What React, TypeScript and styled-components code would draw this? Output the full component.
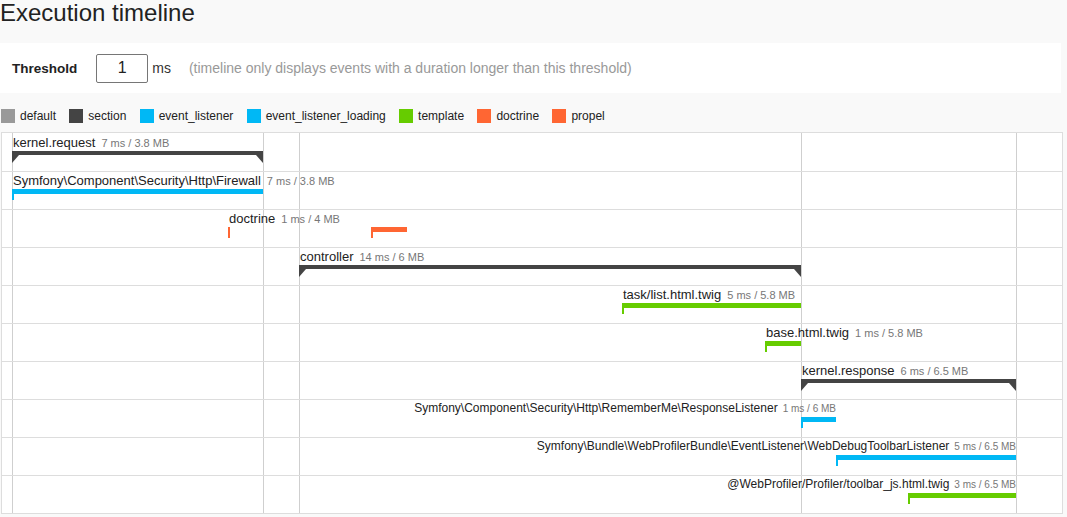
import React from 'react';
import styled, { createGlobalStyle, css } from 'styled-components';

type Kind = 'default' | 'section' | 'event_listener' | 'event_listener_loading' | 'template' | 'doctrine' | 'propel';

interface TimelineEvent {
  label: string;
  duration: string;
  kind: Kind;
  periods: [number, number][];
  alignEnd?: boolean;
}

const COLORS: Record<Kind, string> = {
  default: '#999999',
  section: '#444444',
  event_listener: '#00b8f5',
  event_listener_loading: '#00b8f5',
  template: '#66cc00',
  doctrine: '#ff6633',
  propel: '#ff6633',
};

const LEGEND: Kind[] = ['default', 'section', 'event_listener', 'event_listener_loading', 'template', 'doctrine', 'propel'];

// page x of the timeline's inner left edge, and its inner width
const ORIGIN = 2;
const INNER_WIDTH = 1060;

const GRID_LINES = [12, 263, 299, 801, 1016];

const EVENTS: TimelineEvent[] = [
  { label: 'kernel.request', duration: '7 ms / 3.8 MB', kind: 'section', periods: [[12, 263]] },
  { label: 'Symfony\\Component\\Security\\Http\\Firewall', duration: '7 ms / 3.8 MB', kind: 'event_listener', periods: [[12, 263]] },
  { label: 'doctrine', duration: '1 ms / 4 MB', kind: 'doctrine', periods: [[228, 229], [371, 407]] },
  { label: 'controller', duration: '14 ms / 6 MB', kind: 'section', periods: [[299, 801]] },
  { label: 'task/list.html.twig', duration: '5 ms / 5.8 MB', kind: 'template', periods: [[622, 801]] },
  { label: 'base.html.twig', duration: '1 ms / 5.8 MB', kind: 'template', periods: [[765, 801]] },
  { label: 'kernel.response', duration: '6 ms / 6.5 MB', kind: 'section', periods: [[801, 1016]] },
  {
    label: 'Symfony\\Component\\Security\\Http\\RememberMe\\ResponseListener',
    duration: '1 ms / 6 MB',
    kind: 'event_listener',
    periods: [[801, 836]],
    alignEnd: true,
  },
  {
    label: 'Symfony\\Bundle\\WebProfilerBundle\\EventListener\\WebDebugToolbarListener',
    duration: '5 ms / 6.5 MB',
    kind: 'event_listener',
    periods: [[836, 1016]],
    alignEnd: true,
  },
  {
    label: '@WebProfiler/Profiler/toolbar_js.html.twig',
    duration: '3 ms / 6.5 MB',
    kind: 'template',
    periods: [[908, 1016]],
    alignEnd: true,
  },
];

const GlobalStyle = createGlobalStyle`
  body {
    margin: 0;
    background: #f9f9f9;
    font-family: "Liberation Sans", Arial, sans-serif;
    color: #222;
  }
`;

function App() {
  return (
    <Page>
      <GlobalStyle />
      <Title>Execution timeline</Title>

      <ThresholdPanel>
        <ThresholdLabel>Threshold</ThresholdLabel>
        <ThresholdInput type="text" value="1" readOnly />
        <Unit>ms</Unit>
        <Hint>(timeline only displays events with a duration longer than this threshold)</Hint>
      </ThresholdPanel>

      <Legend>
        {LEGEND.map((kind) => (
          <LegendItem key={kind}>
            <Swatch $color={COLORS[kind]} />
            {kind}
          </LegendItem>
        ))}
      </Legend>

      <Timeline>
        {GRID_LINES.map((x) => (
          <GridLine key={x} style={{ left: x - ORIGIN }} />
        ))}
        {EVENTS.map((event) => {
          const [start] = event.periods[0];
          const end = event.periods[event.periods.length - 1][1];
          const place = event.alignEnd ? { right: INNER_WIDTH - (end - ORIGIN) } : { left: start - ORIGIN + 1 };
          return (
            <Row key={event.label}>
              <Caption style={place} $small={event.alignEnd}>
                {event.label}
                <Duration $small={event.alignEnd}>{event.duration}</Duration>
              </Caption>
              {event.periods.map(([from, to]) => (
                <Bar
                  key={from}
                  $color={COLORS[event.kind]}
                  $section={event.kind === 'section'}
                  style={{ left: from - ORIGIN, width: Math.max(to - from, 1) }}
                />
              ))}
            </Row>
          );
        })}
      </Timeline>
    </Page>
  );
}

const Page = styled.div`
  width: 1067px;
`;

const Title = styled.h2`
  margin: 0;
  font-size: 24px;
  line-height: 26px;
  font-weight: normal;
  color: #222;
`;

const ThresholdPanel = styled.div`
  display: flex;
  align-items: center;
  width: 1061px;
  height: 50px;
  margin-top: 17px;
  padding-left: 12px;
  box-sizing: border-box;
  background: #fff;
`;

const ThresholdLabel = styled.label`
  font-size: 13.5px;
  font-weight: bold;
  color: #222;
  margin-right: 19px;
`;

const ThresholdInput = styled.input`
  box-sizing: border-box;
  width: 52px;
  height: 29px;
  padding: 0;
  border: 1px solid #767676;
  border-radius: 2px;
  font-family: inherit;
  font-size: 16px;
  color: #222;
  text-align: center;
  background: #fff;
`;

const Unit = styled.span`
  margin-left: 4px;
  font-size: 14px;
  color: #333;
`;

const Hint = styled.span`
  margin-left: 18px;
  font-size: 14px;
  color: #999;
`;

const Legend = styled.div`
  display: flex;
  align-items: center;
  column-gap: 13.3px;
  height: 14px;
  margin-top: 16px;
  padding-left: 1px;
`;

const LegendItem = styled.span`
  display: flex;
  align-items: center;
  gap: 5px;
  font-size: 12px;
  line-height: 14px;
  color: #222;
`;

const Swatch = styled.span<{ $color: string }>`
  width: 14px;
  height: 14px;
  background: ${(p) => p.$color};
`;

const Timeline = styled.div`
  position: relative;
  width: 1062px;
  margin: 9px 0 0 1px;
  padding-top: 1px;
  box-sizing: border-box;
  background: #fff;
  border: 1px solid #ddd;
  border-bottom: 0;
`;

const GridLine = styled.div`
  position: absolute;
  top: 0;
  bottom: 0;
  width: 1px;
  background: #cfcfcf;
`;

const Row = styled.div`
  position: relative;
  height: 37px;
  border-bottom: 1px solid #ddd;
`;

const Caption = styled.div<{ $small?: boolean }>`
  position: absolute;
  top: 1px;
  display: flex;
  align-items: baseline;
  white-space: nowrap;
  font-size: ${(p) => (p.$small ? '12px' : '13px')};
  line-height: ${(p) => (p.$small ? '14px' : '15px')};
  color: #222;
`;

const Duration = styled.span<{ $small?: boolean }>`
  margin-left: ${(p) => (p.$small ? '5px' : '6px')};
  font-size: ${(p) => (p.$small ? '10px' : '11px')};
  color: #777;
`;

const Bar = styled.div<{ $color: string; $section: boolean }>`
  position: absolute;
  top: 17px;
  height: ${(p) => (p.$section ? '4px' : '5px')};
  background: ${(p) => p.$color};

  ${(p) =>
    p.$section
      ? css`
          &::before,
          &::after {
            content: '';
            position: absolute;
            top: 4px;
            width: 0;
            height: 0;
            border-top: 8px solid ${p.$color};
          }
          &::before {
            left: 0;
            border-right: 7px solid transparent;
          }
          &::after {
            right: 0;
            border-left: 7px solid transparent;
          }
        `
      : css`
          &::before {
            content: '';
            position: absolute;
            left: 0;
            top: 0;
            width: 2px;
            height: 11px;
            background: ${p.$color};
          }
        `}
`;

export default App;
